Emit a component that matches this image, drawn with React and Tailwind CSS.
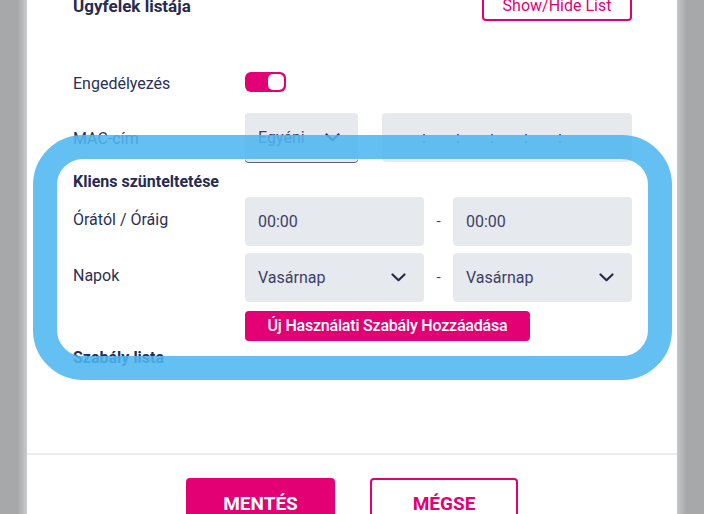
import React from "react";

const Chevron = ({ className = "" }) => (
  <svg width="15" height="9" viewBox="0 0 15 9" fill="none" className={className}>
    <path d="M1.5 1.5 L7.5 7.2 L13.5 1.5" stroke="#262b50" strokeWidth="2.2" strokeLinecap="round" strokeLinejoin="round" />
  </svg>
);

const Field = ({ children, className = "" }) => (
  <div className={`h-[49px] bg-[#e6e9ed] rounded-[4px] flex items-center pl-[13px] pr-[18px] text-[16px] text-[#3d4169] ${className}`}>
    {children}
  </div>
);

const Row = ({ label, children, className = "", labelClass = "" }) => (
  <div className={`flex items-center ${className}`}>
    <div className={`w-[172px] shrink-0 text-[16px] leading-[24px] text-[#2b3056] ${labelClass}`}>{label}</div>
    <div className="flex-1 flex items-center">{children}</div>
  </div>
);

const App = () => {
  return (
    <div className="relative w-[704px] h-[514px] overflow-hidden flex font-[Roboto,sans-serif]">
      {/* backdrop strips */}
      <div className="w-[27px] shrink-0 bg-gradient-to-r from-[#a7a8aa] from-65% to-[#cbcbcc]" />

      <div className="flex-1 bg-white flex flex-col">
        <div className="h-[453px] shrink-0 flex flex-col pl-[46px] pr-[45px]">
          {/* header */}
          <div className="mt-[-9px] h-[30px] flex items-center justify-between">
            <h2 className="text-[17px] font-bold text-[#262b50] leading-[24px]">Ügyfelek listája</h2>
            <button className="h-[30px] w-[150px] border-2 border-[#e20074] rounded-[4px] text-[#e20074] text-[16px] leading-none">
              Show/Hide List
            </button>
          </div>

          <Row label="Engedélyezés" className="mt-[51px] h-[20px]" labelClass="pt-[4px]">
            <div className="w-[41px] h-[20px] bg-[#e20074] rounded-[6px] flex items-center justify-end pr-[2px]">
              <div className="w-[16px] h-[16px] bg-white rounded-[5px]" />
            </div>
          </Row>

          <Row label="MAC-cím" className="mt-[21px]" labelClass="pt-[2px]">
            <Field className="w-[113px] justify-between pr-[14px] shadow-[0_1px_0_#5d607c]">
              <span>Egyéni</span>
              <Chevron />
            </Field>
            <Field className="ml-[24px] flex-1 pl-[40px] gap-[30px] text-[#262b50]">
              <span className="w-[4px]">:</span>
              <span className="w-[4px]">:</span>
              <span className="w-[4px]">:</span>
              <span className="w-[4px]">:</span>
              <span className="w-[4px]">:</span>
            </Field>
          </Row>

          <h3 className="mt-[10px] text-[16px] font-bold text-[#262b50] leading-[20px]">Kliens szünteltetése</h3>

          <Row label="Órától / Óráig" className="mt-[5px]" labelClass="-mt-[4px]">
            <Field className="flex-1">00:00</Field>
            <div className="w-[29px] text-center text-[#3d4169] text-[15px]">-</div>
            <Field className="flex-1">00:00</Field>
          </Row>

          <Row label="Napok" className="mt-[7px]" labelClass="-mt-[4px]">
            <Field className="flex-1 justify-between">
              <span>Vasárnap</span>
              <Chevron />
            </Field>
            <div className="w-[29px] text-center text-[#3d4169] text-[15px]">-</div>
            <Field className="flex-1 justify-between">
              <span>Vasárnap</span>
              <Chevron />
            </Field>
          </Row>

          <div className="mt-[9px] pl-[172px]">
            <button className="h-[30px] w-[285px] bg-[#e20074] rounded-[4px] text-white text-[16px] font-medium leading-none tracking-[-0.2px]">
              Új Használati Szabály Hozzáadása
            </button>
          </div>

          <h3 className="mt-[7px] text-[16px] font-bold text-[#262b50] leading-[20px]">Szabály lista</h3>
        </div>

        {/* footer */}
        <div className="border-t-2 border-[#ededee] pt-[23px] flex justify-center gap-[35px]">
          <button className="w-[149px] h-[52px] shrink-0 bg-[#e20074] rounded-[4px] text-white text-[19px] font-bold leading-[20px] flex items-center justify-center">
            MENTÉS
          </button>
          <button className="w-[148px] h-[52px] shrink-0 bg-white border-2 border-[#e20074] rounded-[4px] text-[#e20074] text-[19px] font-bold leading-[20px] flex items-center justify-center">
            MÉGSE
          </button>
        </div>
      </div>

      <div className="w-[27px] shrink-0 bg-gradient-to-r from-[#c6c6c7] to-[#a7a8aa] to-35%" />

      {/* highlight annotation */}
      <div className="absolute left-[33px] top-[135px] w-[639px] h-[245px] border-[24px] border-[#4fb6f0e0] rounded-[50px] pointer-events-none" />
    </div>
  );
};

export default App;
